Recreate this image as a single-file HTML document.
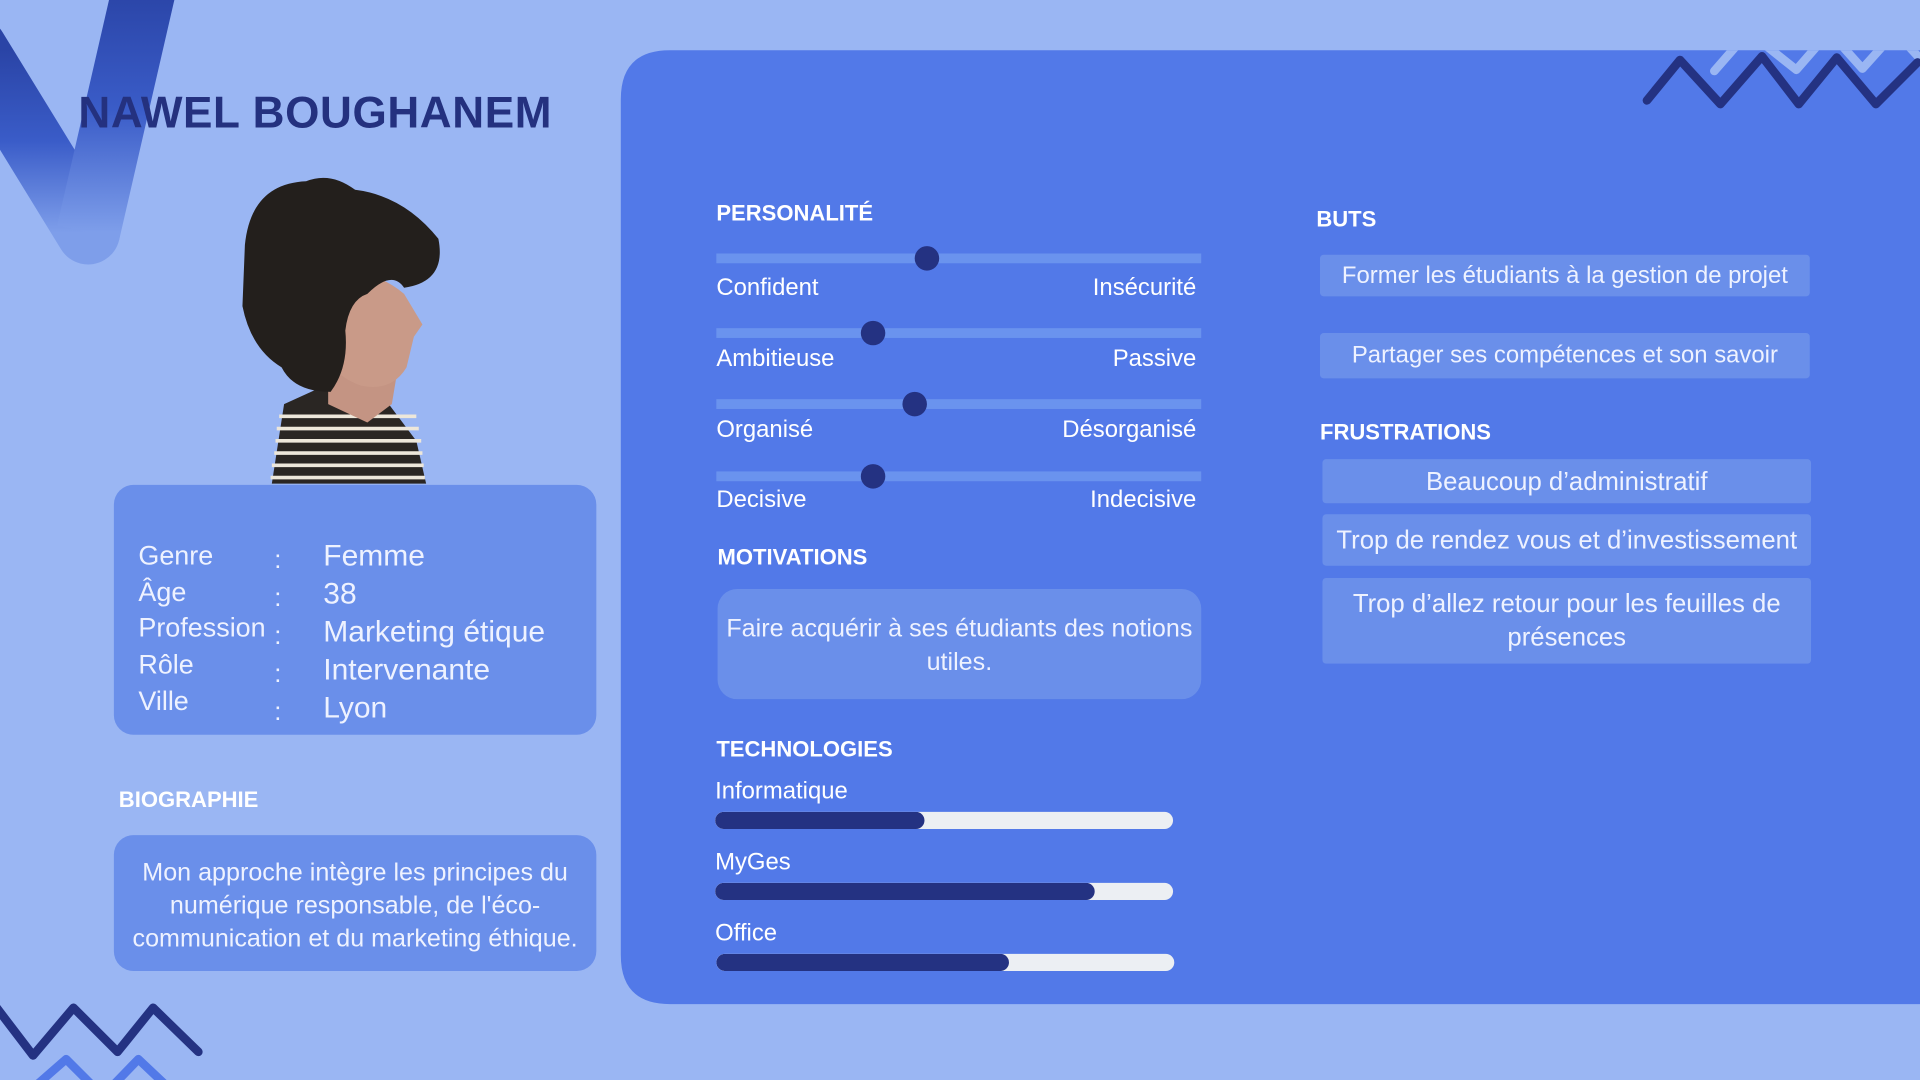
<!DOCTYPE html>
<html><head><meta charset="utf-8"><style>
html,body{margin:0;padding:0;width:1920px;height:1080px;overflow:hidden;background:#9AB6F3}
#s{position:absolute;left:0;top:0;width:1568px;height:882px;transform:scale(1.22449);transform-origin:0 0;font-family:"Liberation Sans",sans-serif;color:#fff}
.a{position:absolute;white-space:nowrap}
.h{font-weight:bold;font-size:18px;color:#fff}
.card{position:absolute;background:#6A8FEA;border-radius:16px}
.box{position:absolute;background:#6A8FEA;border-radius:3px;text-align:center;font-size:19.5px;color:#EEF2FF;display:flex;align-items:center;justify-content:center;line-height:27px}
.tr{position:absolute;left:585px;width:396px;height:8px;background:#6A93EE}
.kn{position:absolute;width:20px;height:20px;border-radius:50%;background:#243282}
.lb{position:absolute;font-size:19.5px;color:#fff}
.bar{position:absolute;left:584px;width:374px;height:14px;border-radius:7px;background:#ECEFF3;overflow:hidden}
.bar i{display:block;height:100%;background:#243282;border-radius:7px}
</style></head><body><div id="s">
<svg class="a" style="left:0;top:0" width="1568" height="882">
<defs><linearGradient id="g" x1="0" y1="0" x2="0" y2="1"><stop offset="0" stop-color="#2A44A6"/><stop offset="0.5" stop-color="#3A5CC8"/><stop offset="1" stop-color="#7E9EEA"/></linearGradient></defs>
<path d="M-20 40 L72 190" stroke="url(#g)" stroke-width="52" stroke-linecap="round" fill="none"/>
<path d="M72 190 L118 -10" stroke="url(#g)" stroke-width="52" fill="none"/>
<path d="M507 41 H1568 V820 H547 Q507 820 507 780 V81 Q507 41 547 41Z" fill="#5279E8"/>
<clipPath id="c"><rect x="507" y="41" width="1061" height="100"/></clipPath>
<polyline clip-path="url(#c)" points="1400,58 1428,26 1467,57 1494,26 1521,56 1548,26 1570,50" stroke="#9AB6F3" stroke-width="7" fill="none" stroke-linecap="round" stroke-linejoin="round"/>
<polyline points="1345,82 1372,49 1405,85 1439,46 1469,85 1500,47 1532,85 1566,51" stroke="#243282" stroke-width="7" fill="none" stroke-linecap="round" stroke-linejoin="round"/>
<polyline points="14,900 54,865 84,895 113,865 150,900" stroke="#5279E8" stroke-width="7" fill="none" stroke-linejoin="round"/>
<polyline points="-5,820 27,862 60,823 96,859 125,823 162,859" stroke="#243282" stroke-width="7" fill="none" stroke-linecap="round" stroke-linejoin="round"/>
<path d="M222 395 L232 330 L265 315 L310 320 L340 360 L348 395Z" fill="#2a2623"/>
<g stroke="#EDE7DA" stroke-width="3">
<path d="M228 340 L340 340 M226 350 L342 350 M225 360 L344 360 M224 370 L345 370 M222 380 L346 380 M221 390 L347 390"/>
</g>
<path d="M268 300 L268 330 L300 345 L320 330 L325 300Z" fill="#C49483"/>
<path d="M262 225 Q300 215 330 240 L345 265 L338 275 L332 300 Q320 320 295 315 Q265 305 260 270Z" fill="#C99A88"/>
<path d="M200 200 Q205 150 250 148 Q270 140 290 155 Q330 160 358 195 Q365 230 330 235 Q320 220 300 240 Q285 245 282 270 Q285 300 270 320 Q240 320 230 300 Q205 285 198 250Z" fill="#231F1C"/>
</svg>
<div class="a" style="left:64px;top:71px;font-size:36px;font-weight:bold;color:#24317F;letter-spacing:0.5px">NAWEL BOUGHANEM</div>

<div class="card" style="left:93px;top:396px;width:394px;height:204px"></div>
<div class="a" style="left:113px;top:439px;font-size:22px;line-height:29.7px;color:#EEF2FF">Genre<br>Âge<br>Profession<br>Rôle<br>Ville</div>
<div class="a" style="left:224px;top:442px;font-size:21px;line-height:31px;color:#EEF2FF">:<br>:<br>:<br>:<br>:</div>
<div class="a" style="left:264px;top:439px;font-size:24.5px;line-height:31px;color:#EEF2FF">Femme<br>38<br>Marketing étique<br>Intervenante<br>Lyon</div>

<div class="a h" style="left:97px;top:643px">BIOGRAPHIE</div>
<div class="card" style="left:93px;top:682px;width:394px;height:111px"></div>
<div class="a" style="left:88px;top:699px;width:404px;text-align:center;font-size:20.5px;line-height:27px;color:#EEF2FF;white-space:normal">Mon approche intègre les principes du numérique responsable, de l'éco-communication et du marketing éthique.</div>

<div class="a h" style="left:585px;top:164px">PERSONALITÉ</div>
<div class="tr" style="top:207px"></div><div class="kn" style="left:747px;top:201px"></div>
<div class="tr" style="top:268px"></div><div class="kn" style="left:703px;top:262px"></div>
<div class="tr" style="top:326px"></div><div class="kn" style="left:737px;top:320px"></div>
<div class="tr" style="top:385px"></div><div class="kn" style="left:703px;top:379px"></div>
<div class="lb" style="left:585px;top:224px">Confident</div><div class="lb" style="right:591px;top:224px">Insécurité</div>
<div class="lb" style="left:585px;top:282px">Ambitieuse</div><div class="lb" style="right:591px;top:282px">Passive</div>
<div class="lb" style="left:585px;top:340px">Organisé</div><div class="lb" style="right:591px;top:340px">Désorganisé</div>
<div class="lb" style="left:585px;top:397px">Decisive</div><div class="lb" style="right:591px;top:397px">Indecisive</div>

<div class="a h" style="left:586px;top:445px">MOTIVATIONS</div>
<div class="card" style="left:586px;top:481px;width:395px;height:90px"></div>
<div class="a" style="left:581px;top:500px;width:405px;text-align:center;font-size:20.5px;line-height:27px;color:#EEF2FF;white-space:normal">Faire acquérir à ses étudiants des notions utiles.</div>

<div class="a h" style="left:585px;top:602px">TECHNOLOGIES</div>
<div class="lb" style="left:584px;top:635px">Informatique</div>
<div class="bar" style="top:663px"><i style="width:171px"></i></div>
<div class="lb" style="left:584px;top:693px">MyGes</div>
<div class="bar" style="top:721px"><i style="width:310px"></i></div>
<div class="lb" style="left:584px;top:751px">Office</div>
<div class="bar" style="top:779px;left:585px"><i style="width:239px"></i></div>

<div class="a h" style="left:1075px;top:169px">BUTS</div>
<div class="box" style="left:1078px;top:208px;width:400px;height:34px">Former les étudiants à la gestion de projet</div>
<div class="box" style="left:1078px;top:272px;width:400px;height:37px">Partager ses compétences et son savoir</div>
<div class="a h" style="left:1078px;top:343px">FRUSTRATIONS</div>
<div class="box" style="left:1080px;top:375px;width:399px;height:36px;font-size:21px">Beaucoup d’administratif</div>
<div class="box" style="left:1080px;top:420px;width:399px;height:42px;font-size:21px">Trop de rendez vous et d’investissement</div>
<div class="box" style="left:1080px;top:472px;width:399px;height:70px;font-size:21px">Trop d’allez retour pour les feuilles de<br>présences</div>
</div></body></html>
